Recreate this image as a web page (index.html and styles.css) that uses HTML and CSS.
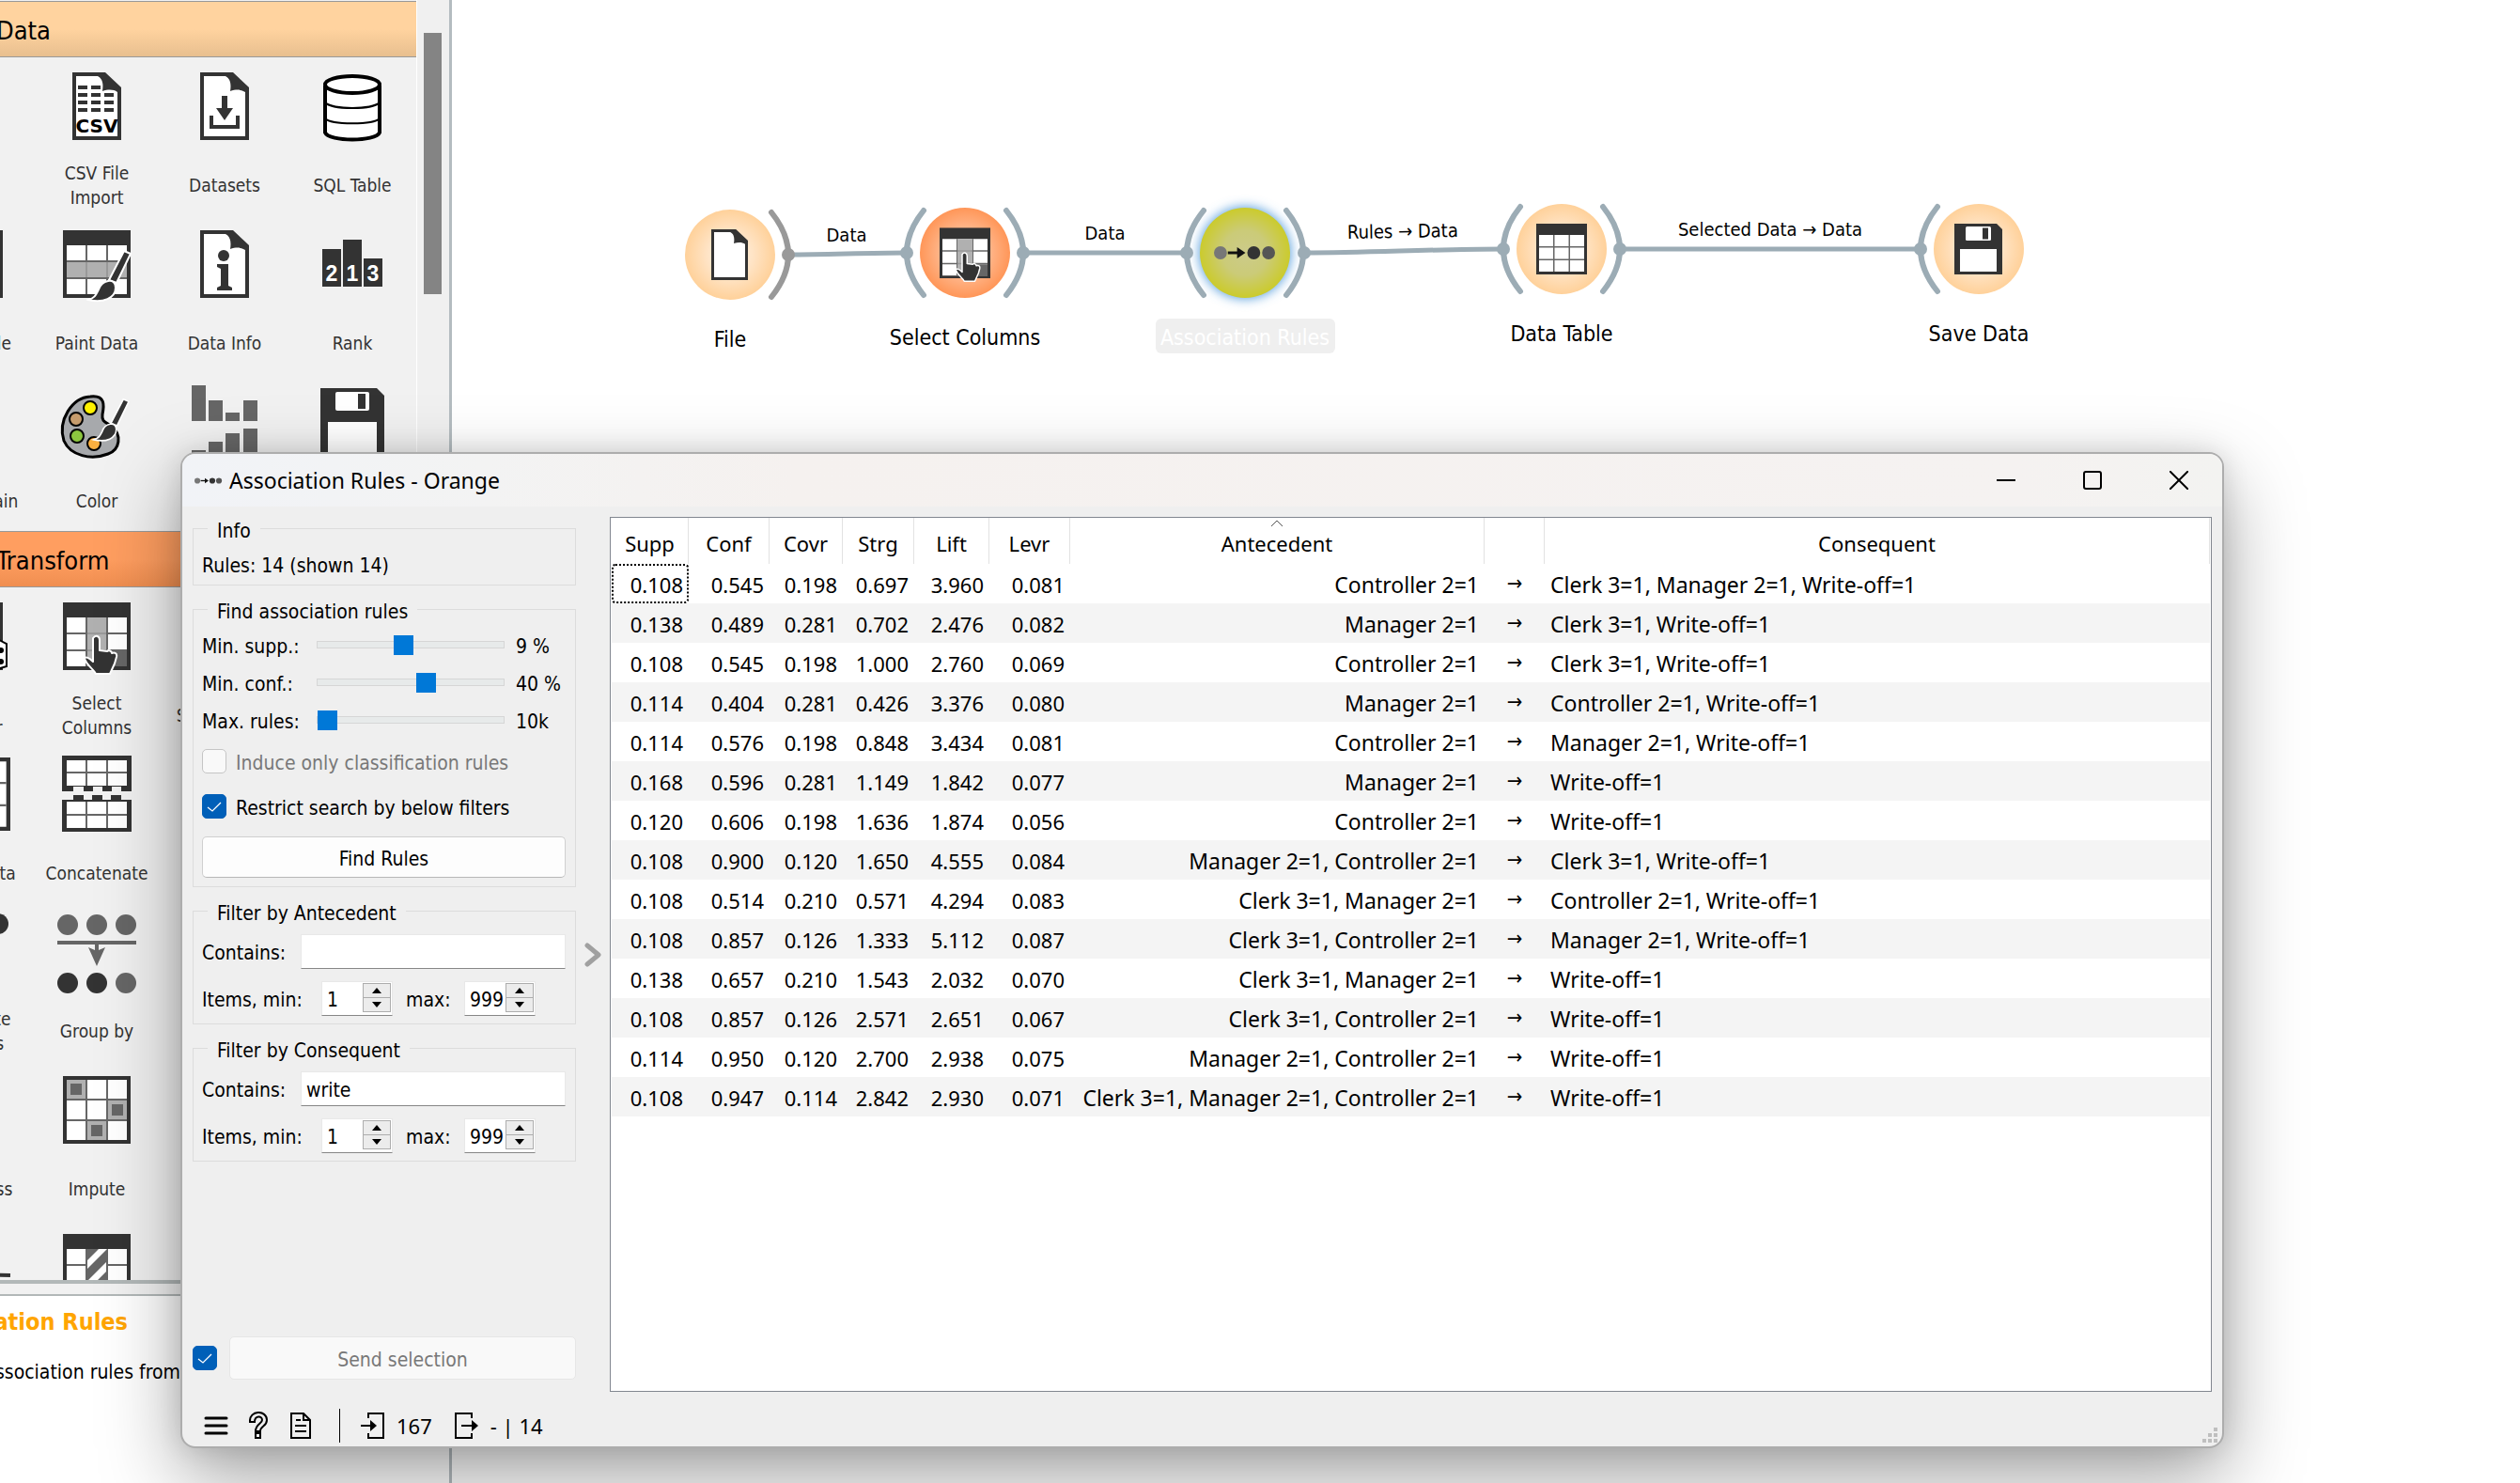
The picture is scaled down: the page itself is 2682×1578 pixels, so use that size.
FILE: index.html
```
<!DOCTYPE html>
<html lang="en">
<head>
<meta charset="utf-8">
<title>Association Rules - Orange</title>
<link rel="stylesheet" href="styles.css">
</head>
<body>
<svg class="defs" aria-hidden="true">
  <defs>
    <radialGradient id="g-data"><stop offset="0" stop-color="#fff3e4"/><stop offset=".5" stop-color="#ffe4c6"/><stop offset="1" stop-color="#ffd19a"/></radialGradient>
    <radialGradient id="g-transform"><stop offset="0" stop-color="#ffcfb3"/><stop offset=".5" stop-color="#ffb98f"/><stop offset="1" stop-color="#ff9658"/></radialGradient>
    <radialGradient id="g-rules"><stop offset="0" stop-color="#cccb8a"/><stop offset=".5" stop-color="#cbcb78"/><stop offset="1" stop-color="#cbcb2c"/></radialGradient>
    <filter id="glow" x="-40%" y="-40%" width="180%" height="180%"><feGaussianBlur stdDeviation="6"/></filter>
    <symbol id="i-page" viewBox="0 0 52 72"><path d="M0 0H35L52 16V72H0Z" fill="#333"/><path d="M4 4H27C33 7 33 14 32 20C38 18 44 18 48 21V68H4Z" fill="#fff"/></symbol>
    <symbol id="i-table" viewBox="0 0 72 72"><path d="M0 0H72V72H0Z" fill="#333"/><path d="M4 16H68V68H4Z" fill="#fff"/><path d="M25 16V68M47 16V68M4 33H68M4 51H68" stroke="#666" stroke-width="2"/></symbol>
    <symbol id="i-grid" viewBox="0 0 72 72"><path d="M0 0H72V72H0Z" fill="#333"/><path d="M4 4H68V68H4Z" fill="#fff"/><path d="M25 4V68M47 4V68M4 25H68M4 47H68" stroke="#666" stroke-width="2"/></symbol>
    <symbol id="i-hand" viewBox="0 0 40 44"><path d="M12 4C15 0 19 2 19 6V17L27 18C29 16 32 18 32 20C35 19 38 20 37 24L35 31L30 42H15C12 36 6 34 3 26C4 23 8 25 12 29Z" fill="#333" stroke="#fff" stroke-width="2" stroke-linejoin="round"/></symbol>
    <symbol id="i-select" viewBox="0 0 72 78"><use href="#i-table" width="72" height="72"/><path d="M26 16H46V68H26Z" fill="#b0b0b0"/><path d="M48 52H68V68H48Z" fill="#666"/><path d="M26 33H46M26 51H46" stroke="#999" stroke-width="2"/><use href="#i-hand" x="20" y="34" width="40" height="44"/></symbol>
    <symbol id="i-brush" viewBox="0 0 48 58"><path d="M40 1L47 4L32 35L24 32Z" fill="#333" stroke="#fff" stroke-width="2"/><path d="M23 33C28 32 31 35 31 40C31 51 18 57 2 53C9 51 10 48 13 42C15 36 18 34 23 33Z" fill="#333" stroke="#fff" stroke-width="2"/></symbol>
    <symbol id="i-floppy" viewBox="0 0 68 72"><path d="M0 0H60L68 8V72H0Z" fill="#333"/><rect x="16" y="4" width="36" height="20" rx="2" fill="#fff"/><path d="M40 6H48V22H40Z" fill="#333"/><path d="M8 36H60V68H8Z" fill="#fff"/></symbol>
    <symbol id="i-rules" viewBox="0 0 68 20"><circle cx="7" cy="10" r="7" fill="#777"/><path d="M15 10H27" stroke="#111" stroke-width="3"/><path d="M25 4L34 10L25 16Z" fill="#111"/><circle cx="43" cy="10" r="7" fill="#333"/><circle cx="59" cy="10" r="7" fill="#555"/></symbol>
  </defs>
</svg>

<main class="workspace">
  <aside class="sidebar">
    <div class="toolbox">
      <div class="toolbox-list">
        <h2 class="category category-data">Data</h2>
        <div class="widgets">
          <a href="#file" class="widget"></a>
          <a href="#csv" class="widget"><svg class="icon" viewBox="0 0 84 84"><use href="#i-page" x="16" y="6" width="52" height="72"/><path d="M22 22H32M36 22H46M22 30H32M36 30H46M50 30H60M22 38H32M36 38H46M50 38H60M22 46H32M36 46H46M50 46H60" stroke="#333" stroke-width="4"/><text x="42" y="70" class="csv">CSV</text></svg><span>CSV File<br>Import</span></a>
          <a href="#datasets" class="widget"><svg class="icon" viewBox="0 0 84 84"><use href="#i-page" x="16" y="6" width="52" height="72"/><path d="M39 31H45V44H51L42 57L33 44H39Z" fill="#333"/><path d="M28 52V64H56V52" fill="none" stroke="#333" stroke-width="4"/></svg><span>Datasets</span></a>
          <a href="#sql" class="widget"><svg class="icon" viewBox="0 0 84 84"><path d="M13 20V70C17 80 67 80 71 70V20" fill="#fff" stroke="#000" stroke-width="4"/><ellipse cx="42" cy="19" rx="29" ry="9" fill="#fff" stroke="#000" stroke-width="4"/><path d="M13 38C20 46 64 46 71 38M13 55C20 62 64 62 71 55" fill="none" stroke="#000" stroke-width="2"/></svg><span>SQL Table</span></a>

          <a href="#table" class="widget"><svg class="icon" viewBox="0 0 84 84"><use href="#i-table" x="6" y="6" width="72" height="72"/></svg><span>Data Table</span></a>
          <a href="#paint" class="widget"><svg class="icon" viewBox="0 0 84 84"><use href="#i-table" x="6" y="6" width="72" height="72"/><path d="M10 40H74V56H10Z" fill="#b0b0b0"/><path d="M31 40V56M53 40V56" stroke="#999" stroke-width="2"/><use href="#i-brush" x="31" y="27" width="48" height="58"/></svg><span>Paint Data</span></a>
          <a href="#info" class="widget"><svg class="icon" viewBox="0 0 84 84"><use href="#i-page" x="16" y="6" width="52" height="72"/><circle cx="41" cy="33" r="6" fill="#333"/><path d="M34 42H46V65L50 67V70H34V67L38 65V47L34 45Z" fill="#333"/></svg><span>Data Info</span></a>
          <a href="#rank" class="widget"><svg class="icon" viewBox="0 0 84 84"><path d="M10 26H30V66H10ZM32 16H52V66H32ZM54 36H74V66H54Z" fill="#333"/><text x="20" y="60" class="rank">2</text><text x="42" y="60" class="rank">1</text><text x="64" y="60" class="rank">3</text></svg><span>Rank</span></a>

          <a href="#domain" class="widget"><svg class="icon"></svg><span>Edit Domain</span></a>
          <a href="#color" class="widget"><svg class="icon" viewBox="0 0 84 84"><path d="M35 15C51 13 50 24 48 34C47 42 51 42 57 46C70 56 66 72 54 76C36 83 14 78 7 62C0 40 16 16 35 15Z" fill="#a7a9ac" stroke="#000" stroke-width="3"/><g stroke="#000" stroke-width="2"><circle cx="35" cy="27" r="7" fill="#fff200"/><circle cx="20" cy="39" r="7" fill="#c69c6d"/><circle cx="21" cy="57" r="7" fill="#8cc63f"/><circle cx="39" cy="65" r="7" fill="#fbb040"/></g><use href="#i-brush" x="36" y="17" width="42" height="48"/></svg><span>Color</span></a>
          <a href="#stats" class="widget"><svg class="icon" viewBox="0 0 84 84"><path d="M7 3H22V41H7ZM25 19H40V41H25ZM43 32H58V41H43ZM62 19H77V41H62ZM7 72H22V84H7ZM25 63H40V84H25ZM43 54H58V84H43ZM62 49H77V84H62Z" fill="#666"/></svg></a>
          <a href="#save" class="widget"><svg class="icon" viewBox="0 0 84 84"><use href="#i-floppy" x="8" y="6" width="68" height="72"/></svg></a>
        </div>
        <h2 class="category category-transform">Transform</h2>
        <div class="widgets">
          <a href="#sampler" class="widget"><svg class="icon" viewBox="0 0 84 84"><use href="#i-table" x="6" y="6" width="72" height="72"/><path d="M54 56L74 46L82 50V74L62 80L54 76Z" fill="#fff" stroke="#000" stroke-width="2"/><circle cx="76" cy="57" r="3"/><circle cx="76" cy="69" r="3"/></svg><span>Data<br>Sampler</span></a>
          <a href="#select" class="widget"><svg class="icon" viewBox="0 0 84 84"><use href="#i-select" x="6" y="6" width="72" height="78"/></svg><span>Select<br>Columns</span></a>
          <a href="#rows" class="widget"><svg class="icon"></svg><span>Select Rows</span></a>
          <a href="#transpose" class="widget"></a>

          <a href="#merge" class="widget"><svg class="icon" viewBox="0 0 84 84"><use href="#i-grid" x="8" y="3" width="78" height="78"/></svg><span>Merge Data</span></a>
          <a href="#concat" class="widget"><svg class="icon" viewBox="0 0 84 84"><path d="M5 1H79V39H68V34H58V39H48V34H38V39H28V34H17V39H5ZM5 48H17V43H28V48H37V43H48V48H57V43H68V48H79V82H5Z" fill="#333"/><path d="M10 6H74V33H10ZM10 50H74V78H10Z" fill="#fff"/><path d="M31 6V33M53 6V33M10 19H74M31 50V78M53 50V78M10 64H74" stroke="#666" stroke-width="2"/></svg><span>Concatenate</span></a>
          <a href="#index" class="widget"><svg class="icon"></svg><span>Select by<br>Data Index</span></a>
          <a href="#unique" class="widget"></a>

          <a href="#aggregate" class="widget"><svg class="icon" viewBox="0 0 84 84"><circle cx="73" cy="12" r="11" fill="#333"/></svg><span>Aggregate<br>Columns</span></a>
          <a href="#group" class="widget"><svg class="icon" viewBox="0 0 84 84"><g fill="#666"><circle cx="11" cy="13" r="11"/><circle cx="42" cy="13" r="11"/><circle cx="73" cy="13" r="11"/><circle cx="73" cy="75" r="11"/><path d="M0 30H84V34H44V40L51 37L42 57L33 37L40 40V34H0Z"/></g><circle cx="11" cy="75" r="11" fill="#333"/><circle cx="42" cy="75" r="11" fill="#333"/></svg><span>Group by</span></a>
          <a href="#pivot" class="widget"><svg class="icon"></svg><span>Pivot Table</span></a>
          <a href="#apply" class="widget"></a>

          <a href="#preprocess" class="widget"><svg class="icon"></svg><span>Preprocess</span></a>
          <a href="#impute" class="widget"><svg class="icon" viewBox="0 0 84 84"><use href="#i-grid" x="6" y="6" width="72" height="72"/><path d="M10 10H30V30H10ZM54 32H74V52H54ZM32 54H52V74H32Z" fill="#b0b0b0"/><path d="M14 14H26V26H14ZM58 36H70V48H58ZM36 58H48V70H36Z" fill="#666"/></svg><span>Impute</span></a>
          <a href="#continuize" class="widget"></a>
          <a href="#discretize" class="widget"></a>

          <a href="#melt" class="widget"><svg class="icon" viewBox="0 0 84 84"><path d="M6 48L86 50" stroke="#333" stroke-width="4"/></svg></a>
          <a href="#formula" class="widget"><svg class="icon" viewBox="0 0 84 84"><use href="#i-table" x="6" y="6" width="72" height="72"/><path d="M31 22H53V74H31Z" fill="#666"/><path d="M32 34L44 22H53L32 43ZM32 56L52 36V46L32 66Z" fill="#fff"/></svg></a>
        </div>
      </div>
      <div class="scrollbar"><div class="thumb"></div></div>
    </div>
    <div class="splitter"></div>
    <section class="help">
      <h3>Association Rules</h3>
      <p>Induction of association rules from</p>
    </section>
  </aside>

  <section class="canvas" aria-label="Workflow">
    <svg class="workflow">
      <g fill="none" stroke="#9cacb5" stroke-width="5">
        <path d="M358 271C400 271 440 269 484 269M608 269H782M907 269C980 269 1040 265 1119 265M1243 265H1563"/>
      </g>
      <circle cx="844" cy="269" r="49" fill="#5ba0dd" filter="url(#glow)"/>
      <g>
        <circle cx="296" cy="271" r="48" fill="url(#g-data)"/>
        <circle cx="546" cy="269" r="48" fill="url(#g-transform)"/>
        <circle cx="844" cy="269" r="48" fill="url(#g-rules)"/>
        <circle cx="1181" cy="265" r="48" fill="url(#g-data)"/>
        <circle cx="1625" cy="265" r="48" fill="url(#g-data)"/>
      </g>
      <g fill="none" stroke="#9cacb5" stroke-width="6" stroke-linecap="round">
        <path stroke="#999" d="M340 226Q376 271 340 316"/>
        <path d="M502 224Q466 269 502 314M590 224Q626 269 590 314M800 224Q764 269 800 314M888 224Q924 269 888 314M1137 220Q1101 265 1137 310M1225 220Q1261 265 1225 310M1581 220Q1545 265 1581 310"/>
      </g>
      <g fill="#9cacb5">
        <circle cx="358" cy="271" r="7" fill="#999"/><circle cx="484" cy="269" r="7"/><circle cx="608" cy="269" r="7"/><circle cx="782" cy="269" r="7"/><circle cx="907" cy="269" r="7"/><circle cx="1119" cy="265" r="7"/><circle cx="1243" cy="265" r="7"/><circle cx="1563" cy="265" r="7"/>
      </g>
      <use href="#i-page" x="276" y="244" width="39" height="54"/>
      <use href="#i-select" x="519" y="242" width="54" height="59"/>
      <use href="#i-rules" x="811" y="259" width="67" height="20"/>
      <use href="#i-table" x="1154" y="238" width="54" height="54"/>
      <use href="#i-floppy" x="1599" y="238" width="51" height="54"/>
      <rect x="749" y="339" width="191" height="37" rx="6" fill="#efefef"/>
      <g class="link-label">
        <text x="420" y="257">Data</text>
        <text x="695" y="255">Data</text>
        <text x="1012" y="253" transform="rotate(-1 1012 253)">Rules → Data</text>
        <text x="1403" y="251">Selected Data → Data</text>
      </g>
      <g class="node-label">
        <text x="296" y="369">File</text>
        <text x="546" y="367">Select Columns</text>
        <text x="844" y="367" fill="#fff">Association Rules</text>
        <text x="1181" y="363">Data Table</text>
        <text x="1625" y="363">Save Data</text>
      </g>
    </svg>
  </section>

  <section class="dialog" role="dialog" aria-labelledby="dialog-title">
    <header class="titlebar">
      <svg class="title-icon" viewBox="0 0 68 20"><use href="#i-rules" width="68" height="20"/></svg>
      <h1 id="dialog-title">Association Rules - Orange</h1>
      <button class="window-button" aria-label="Minimize"><svg viewBox="0 0 20 20"><path d="M0 10H20" stroke="#000" stroke-width="2"/></svg></button>
      <button class="window-button" aria-label="Maximize"><svg viewBox="0 0 20 20"><rect x="1" y="1" width="18" height="18" rx="2" fill="none" stroke="#000" stroke-width="2"/></svg></button>
      <button class="window-button" aria-label="Close"><svg viewBox="0 0 20 20"><path d="M0 0L20 20M20 0L0 20" stroke="#000" stroke-width="2"/></svg></button>
    </header>

    <div class="dialog-body">
      <div class="controls">
        <fieldset class="group">
          <legend>Info</legend>
          <div class="info">Rules: 14 (shown 14)</div>
        </fieldset>
        <fieldset class="group group-find">
          <legend>Find association rules</legend>
          <div class="slider-row"><label for="supp">Min. supp.:</label><input type="range" id="supp" min="0" max="179" value="82"><output for="supp">9 %</output></div>
          <div class="slider-row"><label for="conf">Min. conf.:</label><input type="range" id="conf" min="0" max="179" value="106"><output for="conf">40 %</output></div>
          <div class="slider-row"><label for="max">Max. rules:</label><input type="range" id="max" min="0" max="179" value="0"><output for="max">10k</output></div>
          <label class="check-row disabled"><input type="checkbox" disabled><span>Induce only classification rules</span></label>
          <label class="check-row"><input type="checkbox" checked><span>Restrict search by below filters</span></label>
          <button class="push">Find Rules</button>
        </fieldset>
        <fieldset class="group group-filter">
          <legend>Filter by Antecedent</legend>
          <div class="contains-row"><label for="ante">Contains:</label><input type="text" id="ante" value=""></div>
          <div class="items-row">
            <label for="amin">Items, min:</label>
            <span class="spin"><input type="text" inputmode="numeric" id="amin" value="1"><span class="steps"><button aria-label="Increase"><svg viewBox="0 0 10 6"><path d="M0 6L5 0L10 6Z"/></svg></button><button aria-label="Decrease"><svg viewBox="0 0 10 6"><path d="M0 0L5 6L10 0Z"/></svg></button></span></span>
            <label for="amax" class="max">max:</label>
            <span class="spin"><input type="text" inputmode="numeric" id="amax" value="999"><span class="steps"><button aria-label="Increase"><svg viewBox="0 0 10 6"><path d="M0 6L5 0L10 6Z"/></svg></button><button aria-label="Decrease"><svg viewBox="0 0 10 6"><path d="M0 0L5 6L10 0Z"/></svg></button></span></span>
          </div>
        </fieldset>
        <fieldset class="group group-filter">
          <legend>Filter by Consequent</legend>
          <div class="contains-row"><label for="cons">Contains:</label><input type="text" id="cons" value="write"></div>
          <div class="items-row">
            <label for="cmin">Items, min:</label>
            <span class="spin"><input type="text" inputmode="numeric" id="cmin" value="1"><span class="steps"><button aria-label="Increase"><svg viewBox="0 0 10 6"><path d="M0 6L5 0L10 6Z"/></svg></button><button aria-label="Decrease"><svg viewBox="0 0 10 6"><path d="M0 0L5 6L10 0Z"/></svg></button></span></span>
            <label for="cmax" class="max">max:</label>
            <span class="spin"><input type="text" inputmode="numeric" id="cmax" value="999"><span class="steps"><button aria-label="Increase"><svg viewBox="0 0 10 6"><path d="M0 6L5 0L10 6Z"/></svg></button><button aria-label="Decrease"><svg viewBox="0 0 10 6"><path d="M0 0L5 6L10 0Z"/></svg></button></span></span>
          </div>
        </fieldset>
        <div class="send-row">
          <input type="checkbox" checked aria-label="Send automatically">
          <button class="push" disabled>Send selection</button>
        </div>
      </div>

      <button class="collapse" aria-label="Toggle controls"><svg viewBox="0 0 20 28"><path d="M4 4L16 14L4 24" fill="none" stroke="#a0a0a0" stroke-width="5" stroke-linecap="round" stroke-linejoin="round"/></svg></button>

      <div class="table-frame">
        <table>
          <colgroup><col class="c-supp"><col class="c-conf"><col class="c-covr"><col class="c-strg"><col class="c-lift"><col class="c-levr"><col class="c-ante"><col class="c-arrow"><col></colgroup>
          <thead><tr><th>Supp</th><th>Conf</th><th>Covr</th><th>Strg</th><th>Lift</th><th>Levr</th><th class="sorted">Antecedent<svg class="sort" viewBox="0 0 14 8"><path d="M1 7L7 1L13 7" fill="none" stroke="#555" stroke-width="1"/></svg></th><th></th><th>Consequent</th></tr></thead>
          <tbody>
            <tr><td class="focus">0.108</td><td>0.545</td><td>0.198</td><td>0.697</td><td>3.960</td><td>0.081</td><td class="ante">Controller 2=1</td><td class="arrow">→</td><td class="cons">Clerk 3=1, Manager 2=1, Write-off=1</td></tr>
            <tr><td>0.138</td><td>0.489</td><td>0.281</td><td>0.702</td><td>2.476</td><td>0.082</td><td class="ante">Manager 2=1</td><td class="arrow">→</td><td class="cons">Clerk 3=1, Write-off=1</td></tr>
            <tr><td>0.108</td><td>0.545</td><td>0.198</td><td>1.000</td><td>2.760</td><td>0.069</td><td class="ante">Controller 2=1</td><td class="arrow">→</td><td class="cons">Clerk 3=1, Write-off=1</td></tr>
            <tr><td>0.114</td><td>0.404</td><td>0.281</td><td>0.426</td><td>3.376</td><td>0.080</td><td class="ante">Manager 2=1</td><td class="arrow">→</td><td class="cons">Controller 2=1, Write-off=1</td></tr>
            <tr><td>0.114</td><td>0.576</td><td>0.198</td><td>0.848</td><td>3.434</td><td>0.081</td><td class="ante">Controller 2=1</td><td class="arrow">→</td><td class="cons">Manager 2=1, Write-off=1</td></tr>
            <tr><td>0.168</td><td>0.596</td><td>0.281</td><td>1.149</td><td>1.842</td><td>0.077</td><td class="ante">Manager 2=1</td><td class="arrow">→</td><td class="cons">Write-off=1</td></tr>
            <tr><td>0.120</td><td>0.606</td><td>0.198</td><td>1.636</td><td>1.874</td><td>0.056</td><td class="ante">Controller 2=1</td><td class="arrow">→</td><td class="cons">Write-off=1</td></tr>
            <tr><td>0.108</td><td>0.900</td><td>0.120</td><td>1.650</td><td>4.555</td><td>0.084</td><td class="ante">Manager 2=1, Controller 2=1</td><td class="arrow">→</td><td class="cons">Clerk 3=1, Write-off=1</td></tr>
            <tr><td>0.108</td><td>0.514</td><td>0.210</td><td>0.571</td><td>4.294</td><td>0.083</td><td class="ante">Clerk 3=1, Manager 2=1</td><td class="arrow">→</td><td class="cons">Controller 2=1, Write-off=1</td></tr>
            <tr><td>0.108</td><td>0.857</td><td>0.126</td><td>1.333</td><td>5.112</td><td>0.087</td><td class="ante">Clerk 3=1, Controller 2=1</td><td class="arrow">→</td><td class="cons">Manager 2=1, Write-off=1</td></tr>
            <tr><td>0.138</td><td>0.657</td><td>0.210</td><td>1.543</td><td>2.032</td><td>0.070</td><td class="ante">Clerk 3=1, Manager 2=1</td><td class="arrow">→</td><td class="cons">Write-off=1</td></tr>
            <tr><td>0.108</td><td>0.857</td><td>0.126</td><td>2.571</td><td>2.651</td><td>0.067</td><td class="ante">Clerk 3=1, Controller 2=1</td><td class="arrow">→</td><td class="cons">Write-off=1</td></tr>
            <tr><td>0.114</td><td>0.950</td><td>0.120</td><td>2.700</td><td>2.938</td><td>0.075</td><td class="ante">Manager 2=1, Controller 2=1</td><td class="arrow">→</td><td class="cons">Write-off=1</td></tr>
            <tr><td>0.108</td><td>0.947</td><td>0.114</td><td>2.842</td><td>2.930</td><td>0.071</td><td class="ante">Clerk 3=1, Manager 2=1, Controller 2=1</td><td class="arrow">→</td><td class="cons">Write-off=1</td></tr>
          </tbody>
        </table>
      </div>
    </div>

    <footer class="statusbar">
      <button class="tool" aria-label="Menu"><svg width="26" height="22" viewBox="0 0 26 22"><path d="M2 3H24M2 11H24M2 19H24" stroke="#000" stroke-width="3" stroke-linecap="round"/></svg></button>
      <button class="tool" aria-label="Help"><svg width="20" height="30" viewBox="0 0 20 30"><path d="M1 11C0-2 19-2 19 9C19 16 12 15 12 21H7C7 13 14 13 14 9C14 4 6 4 6 11ZM7 23H12V28H7Z" fill="none" stroke="#000" stroke-width="2"/></svg></button>
      <button class="tool" aria-label="Report"><svg width="22" height="28" viewBox="0 0 22 28"><path d="M1 1H14L21 8V27H1ZM14 1V8H21M6 8H11M5 14H17M5 20H17" fill="none" stroke="#000" stroke-width="2"/></svg></button>
      <span class="divider"></span>
      <button class="count"><svg width="26" height="28" viewBox="0 0 26 28"><path d="M8 6V1H24V27H8V22M0 14H12" fill="none" stroke="#000" stroke-width="2"/><path d="M10 8L17 14L10 20Z"/></svg>167</button>
      <button class="count"><svg width="26" height="28" viewBox="0 0 26 28"><path d="M18 6V1H1V27H18V22M7 14H20" fill="none" stroke="#000" stroke-width="2"/><path d="M18 8L25 14L18 20Z"/></svg>- | 14</button>
      <svg class="grip" width="16" height="16" viewBox="0 0 16 16"><path d="M12 0H16V4H12ZM6 6H10V10H6ZM12 6H16V10H12ZM0 12H4V16H0ZM6 12H10V16H6ZM12 12H16V16H12Z" fill="#bfbfbf"/></svg>
    </footer>
  </section>
</main>
</body>
</html>
```
FILE: styles.css
```
:root {
  --ui: "DejaVu Sans Condensed", "DejaVu Sans", sans-serif;
  --segoe: "Noto Sans", "Open Sans", sans-serif;
}
* { box-sizing: border-box; }
body { margin: 0; overflow: hidden; background: #fff; font: 21px/26px var(--ui); color: #000; }
button, input { font: inherit; color: inherit; margin: 0; }
button { border: 0; padding: 0; background: none; }
a { color: inherit; text-decoration: none; }
h1, h2, h3, p { margin: 0; font-weight: normal; }
.defs { position: absolute; width: 0; height: 0; }

.workspace { position: relative; display: flex; height: 100vh; }

/* Widget toolbox */
.sidebar { flex: none; width: 481px; display: flex; flex-direction: column; overflow: hidden; border-right: 3px solid #b4bcc0; background: #f1f1f1; }
.toolbox { flex: 1; min-height: 0; display: flex; overflow: hidden; }
.toolbox-list { flex: none; width: 544px; margin-left: -101px; padding-top: 1px; }
.category { height: 60px; padding-left: 97px; border: 1px solid #999; border-width: 1px 0; font-size: 27px; line-height: 62px; }
.category-data { background: linear-gradient(#ffd39f 50%, #e8bf8f); }
.category-transform { background: linear-gradient(#ff9e60 50%, #f08e50); }
.widgets { display: grid; grid-template-columns: repeat(4, 136px); grid-auto-rows: 168px; }
.category-data + .widgets { height: 504px; }
.widget { display: flex; flex-direction: column; align-items: center; gap: 16px; padding-top: 10px; font-size: 19px; color: #333; }
.widget span { display: flex; align-items: center; height: 52px; text-align: center; white-space: nowrap; }
.icon { width: 84px; height: 84px; flex: none; overflow: visible; }
.csv { font: bold 20px "DejaVu Sans", sans-serif; text-anchor: middle; fill: #000; }
.rank { font: bold 23px "Liberation Sans", sans-serif; text-anchor: middle; fill: #fff; }
.scrollbar { width: 35px; flex: none; padding: 35px 7px; border-left: 1px solid #fff; background: #f0f0f0; }
.thumb { height: 278px; width: 19px; background: #848484; }
.splitter { height: 17px; flex: none; border-top: 4px solid #b2b8b8; border-bottom: 2px solid #b2b8b8; }
.help { flex: none; height: 199px; padding: 15px 286px 0 0; display: flex; flex-direction: column; align-items: flex-end; gap: 27px; white-space: nowrap; background: #fff; }
.help h3 { margin-right: 56px; font-size: 25px; font-weight: bold; color: #ffa500; }

/* Workflow canvas */
.canvas { flex: 1; min-width: 0; }
.workflow { display: block; width: 100%; height: 100%; }
.workflow text { text-anchor: middle; }
.link-label { font-size: 20px; }
.node-label { font-size: 23px; }

/* Dialog window */
.dialog { position: absolute; left: 192px; right: 315px; top: 481px; bottom: 37px; display: flex; flex-direction: column; overflow: hidden; border: 2px solid #adadad; border-radius: 16px; background: #efefef; box-shadow: 0 32px 84px rgba(0, 0, 0, .36), 0 0 28px rgba(0, 0, 0, .12); }
.titlebar { flex: none; height: 56px; display: flex; align-items: center; padding-left: 13px; background: linear-gradient(90deg, #f1f3f7, #f3f3f3 15%, #f5f1ef 30%, #f5f2f1 90%, #f3f3f1); }
.title-icon { width: 30px; height: 9px; margin-right: 7px; }
.titlebar h1 { flex: 1; font: 23px/28px var(--segoe); }
.window-button { width: 92px; height: 56px; display: grid; place-items: center; }
.window-button svg { width: 20px; height: 20px; }
.dialog-body { flex: 1; min-height: 0; display: flex; padding: 11px 11px 0; }

.controls { flex: none; width: 408px; display: flex; flex-direction: column; gap: 13px; padding-bottom: 13px; }
.group { margin: 0; min-width: 0; padding: 0 10px 6px 9px; border: 1px solid #dcdcdc; }
.group legend { height: 24px; line-height: 30px; padding: 0 10px; margin-left: 6px; }
.info { padding-top: 14px; line-height: 28px; }
.group-find { padding-top: 6px; padding-bottom: 9px; }
.slider-row { display: flex; align-items: center; height: 40px; }
.slider-row label { width: 122px; padding-top: 3px; }
.slider-row output { margin-left: 12px; padding-top: 3px; white-space: nowrap; }
input[type="range"] { appearance: none; width: 200px; height: 21px; background: none; }
input[type="range"]::-webkit-slider-runnable-track { height: 8px; border: 1px solid #d6d6d6; background: #e7eaea; }
input[type="range"]::-webkit-slider-thumb { appearance: none; width: 21px; height: 21px; margin-top: -7px; background: #0078d7; }
.check-row { display: flex; align-items: center; gap: 10px; height: 48px; white-space: nowrap; }
.check-row span { padding-top: 4px; }
.disabled { color: #787878; }
input[type="checkbox"] { appearance: none; flex: none; width: 26px; height: 26px; border: 1px solid #c5c5c5; border-radius: 5px; background: #f9f9f9; }
input[type="checkbox"]:checked { border-color: #005fb8; background: #005fb8 url("data:image/svg+xml,%3Csvg xmlns='http://www.w3.org/2000/svg' viewBox='0 0 26 26'%3E%3Cpath d='M6 14L11 18L20 9' fill='none' stroke='white' stroke-width='1.3'/%3E%3C/svg%3E") center / 26px 26px; }
.push { display: block; padding-top: 3px; border: 1px solid #d0d0d0; border-bottom-color: #b8b8b8; border-radius: 5px; background: #fdfdfd; }
.push:disabled { border-color: #e6e6e6; background: #f9f9f9; color: #787878; }
.group-find .push { width: 100%; height: 44px; margin-top: 8px; }
.group-filter { padding-top: 13px; padding-bottom: 8px; }
.contains-row, .items-row { display: flex; align-items: center; height: 37px; }
.contains-row { margin-bottom: 13px; }
.contains-row label { width: 105px; padding-top: 2px; }
input[type="text"] { min-width: 0; padding: 3px 5px 0; border: 1px solid #e8e8e8; border-bottom-color: #868686; background: #fff; height: 37px; flex: 1; outline: 0; }
.items-row label { width: 127px; padding-top: 2px; }
.items-row .max { width: 62px; margin-left: 14px; }
.spin { position: relative; display: flex; width: 76px; height: 37px; }
.steps { position: absolute; top: 2px; right: 2px; width: 30px; height: 31px; display: grid; grid-template-rows: 1fr 1fr; gap: 1px; padding: 1px; background: #adadad; }
.steps button { display: grid; place-items: center; background: #ececec; }
.steps svg { width: 10px; height: 6px; }
.send-row { margin-top: auto; display: flex; align-items: center; gap: 13px; }
.send-row .push { flex: 1; height: 46px; }

.collapse { flex: none; width: 36px; display: grid; place-items: center; }
.collapse svg { width: 20px; height: 28px; }

/* Rules table */
.table-frame { flex: 1; min-width: 0; border: 1px solid #828790; background: #fff; padding: 0 1px; font-family: var(--segoe); }
table { width: 100%; table-layout: fixed; border-collapse: separate; border-spacing: 0; }
.c-supp { width: 82px; }
.c-conf, .c-levr { width: 86px; }
.c-covr { width: 78px; }
.c-strg { width: 76px; }
.c-lift { width: 80px; }
.c-ante { width: 441px; }
.c-arrow { width: 64px; }
th { height: 49px; padding: 4px 0 0; border-right: 1px solid #e2e2e2; font-size: 22px; font-weight: normal; }
.sorted { position: relative; }
.sort { position: absolute; top: 2px; left: 50%; width: 14px; height: 8px; margin-left: -7px; }
td { height: 42px; padding: 1px 6px 0 0; font-size: 22px; text-align: right; white-space: nowrap; }
tbody tr:nth-child(even) { background: #f4f4f4; }
td.ante, td.cons { padding: 1px 6px 0; font-size: 23px; }
td.cons { text-align: left; }
td.arrow { padding: 0; text-align: center; font-family: var(--ui); }
.focus { outline: 2px dotted #000; outline-offset: -2px; border-radius: 4px; }

.statusbar { flex: none; height: 58px; display: flex; align-items: center; padding: 14px 5px 0 22px; font: 22px/28px var(--segoe); }
.tool { display: grid; place-items: center; width: 28px; margin-right: 17px; }
.divider { width: 1px; height: 36px; margin: 0 22px 0 10px; background: #000; }
.count { display: flex; align-items: center; gap: 12px; margin-right: 24px; }
.grip { margin-left: auto; align-self: flex-end; margin-bottom: 4px; }
```
